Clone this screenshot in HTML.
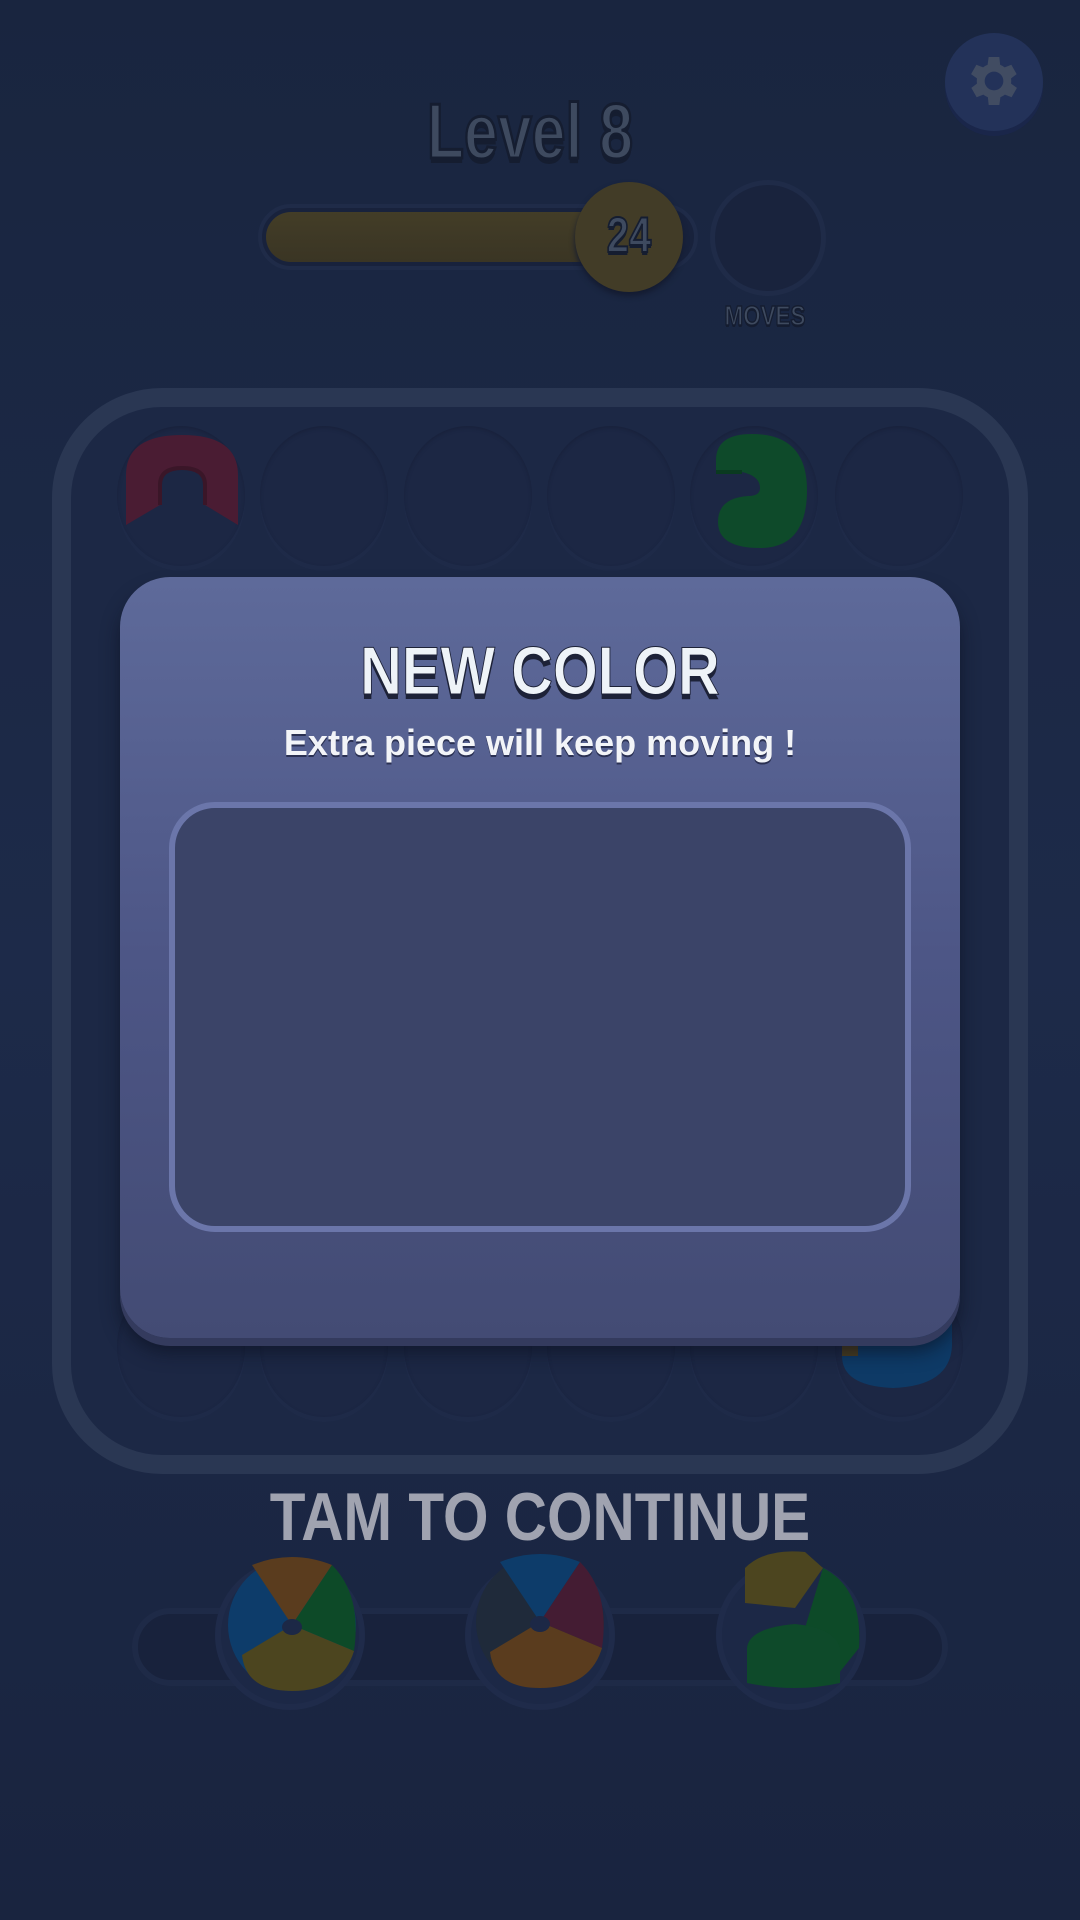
<!DOCTYPE html>
<html><head><meta charset="utf-8"><style>
*{margin:0;padding:0;box-sizing:border-box}
body{width:1080px;height:1920px;overflow:hidden;background:linear-gradient(#19253f,#1d2a49 50%,#19243f);font-family:"Liberation Sans",sans-serif;position:relative}
.abs{position:absolute}
.t{font-family:"Liberation Sans",sans-serif;font-weight:bold;text-align:center}
.hole{position:absolute;width:128px;height:140px;border-radius:50%;background:#1c2744;box-shadow:0 5px 0 #1e2a48,inset 0 2px 3px #19223c}
</style></head><body>
<!-- settings -->
<div class="abs" style="left:945px;top:33px;width:98px;height:98px;border-radius:50%;background:#233259;box-shadow:0 5px 0 #1a264a"></div>
<svg class="abs" style="left:962px;top:49px" width="64" height="64" viewBox="0 0 24 24"><path fill="#414c62" d="M19.4 13a7.5 7.5 0 0 0 0-2l2.1-1.6-2-3.5-2.5 1a7.3 7.3 0 0 0-1.7-1L15 3h-4l-.4 2.9a7.3 7.3 0 0 0-1.7 1l-2.5-1-2 3.5L6.6 11a7.5 7.5 0 0 0 0 2l-2.1 1.6 2 3.5 2.5-1c.5.4 1.1.7 1.7 1L11 21h4l.4-2.9c.6-.3 1.2-.6 1.7-1l2.5 1 2-3.5zM13 15.5A3.5 3.5 0 1 1 13 8.5a3.5 3.5 0 0 1 0 7z" transform="translate(-1 0)"/></svg>
<!-- level -->
<div class="abs t" style="left:330px;top:86px;width:400px;font-size:78px;color:#3e4a5f;-webkit-text-stroke:3px #151d30;text-shadow:0 5px 0 #151d30;transform:scaleX(0.78)">Level 8</div>
<!-- progress -->
<div class="abs" style="left:258px;top:204px;width:440px;height:66px;border-radius:33px;background:#18223c;border:4px solid #1f2b48"></div>
<div class="abs" style="left:266px;top:212px;width:370px;height:50px;border-radius:25px;background:linear-gradient(#433d27,#3a3524)"></div>
<div class="abs" style="left:710px;top:180px;width:116px;height:116px;border-radius:50%;background:#19233d;border:5px solid #1f2b48"></div>
<div class="abs" style="left:575px;top:182px;width:108px;height:110px;border-radius:50%;background:#423c27;box-shadow:0 4px 6px #141b30"></div>
<div class="abs t" style="left:575px;top:206px;width:108px;font-size:50px;color:#3e4a5f;-webkit-text-stroke:2px #151d30;text-shadow:0 3px 0 #151d30;transform:scaleX(0.8)">24</div>
<div class="abs t" style="left:700px;top:300px;width:130px;font-size:28px;color:#3e4a5f;-webkit-text-stroke:1.5px #151d30;text-shadow:0 2px 0 #151d30;transform:scaleX(0.8)">MOVES</div>
<!-- board -->
<div class="abs" style="left:52px;top:388px;width:976px;height:1086px;border-radius:110px;border:19px solid #2a3753;background:#1c2845"></div>
<div class="hole" style="left:117px;top:426px"></div>
<div class="hole" style="left:260px;top:426px"></div>
<div class="hole" style="left:404px;top:426px"></div>
<div class="hole" style="left:547px;top:426px"></div>
<div class="hole" style="left:690px;top:426px"></div>
<div class="hole" style="left:835px;top:426px"></div>
<div class="hole" style="left:117px;top:1277px"></div>
<div class="hole" style="left:260px;top:1277px"></div>
<div class="hole" style="left:404px;top:1277px"></div>
<div class="hole" style="left:547px;top:1277px"></div>
<div class="hole" style="left:690px;top:1277px"></div>
<div class="hole" style="left:835px;top:1277px"></div>
<!-- top pieces -->
<svg class="abs" style="left:120px;top:430px" width="125" height="110"><path d="M6 95 L6 45 Q6 5 62 5 Q118 5 118 45 L118 95 L85 75 L85 55 Q85 38 62 38 Q40 38 40 55 L40 75 Z" fill="#4a1c33"/><path d="M40 75 L40 55 Q40 38 62 38 Q85 38 85 55 L85 75" fill="none" stroke="#3a1628" stroke-width="4"/></svg>
<svg class="abs" style="left:712px;top:430px" width="100" height="125"><path d="M4 30 Q4 4 40 4 Q95 4 95 60 Q95 118 48 118 Q6 118 6 92 Q6 68 36 66 Q48 66 48 58 Q48 46 30 42 L4 42 Z" fill="#0e4a2a"/><path d="M4 42 L30 42" stroke="#0a3a20" stroke-width="4"/></svg>
<!-- right bottom piece -->
<svg class="abs" style="left:838px;top:1316px" width="120" height="80"><path d="M4 40 Q4 70 55 72 Q112 70 114 30 L114 0 L4 0 Z" fill="#0e3a66"/><path d="M4 0 L4 40 L20 40 L20 0Z" fill="#4a3d1f"/></svg>
<!-- modal -->
<div class="abs" style="left:120px;top:577px;width:840px;height:761px;border-radius:50px;background:linear-gradient(#5e6a9a,#4d5686 50%,#434b74);box-shadow:0 8px 0 #343b5e,0 14px 18px rgba(10,15,30,.6)"></div>
<div class="abs" style="left:120px;top:632px;width:840px;text-align:center;font-weight:bold;font-size:68px;color:#eef3f8;text-shadow:0 5px 0 #1d2238;-webkit-text-stroke:1px #1d2238;transform:scaleX(0.85)">NEW COLOR</div>
<div class="abs" style="left:120px;top:722px;width:840px;text-align:center;font-weight:bold;font-size:36px;color:#f2f4f8;text-shadow:0 2px 0 #2a3052">Extra piece will keep moving !</div>
<div class="abs" style="left:169px;top:802px;width:742px;height:430px;border-radius:46px;border:6px solid #6b76aa;background:#3b4468"></div>
<!-- tap -->
<div class="abs t" style="left:140px;top:1478px;width:800px;font-size:68px;color:#a0a3b0;transform:scaleX(0.86)">TAM TO CONTINUE</div>
<!-- tray -->
<div class="abs" style="left:132px;top:1608px;width:816px;height:78px;border-radius:39px;background:#18223c;border:6px solid #1e2a47"></div>
<div class="abs" style="left:215px;top:1560px;width:150px;height:150px;border-radius:50%;background:#1c2846;border:6px solid #1f2b4a"></div>
<div class="abs" style="left:465px;top:1560px;width:150px;height:150px;border-radius:50%;background:#1c2846;border:6px solid #1f2b4a"></div>
<div class="abs" style="left:716px;top:1560px;width:150px;height:150px;border-radius:50%;background:#1c2846;border:6px solid #1f2b4a"></div>
<svg class="abs" style="left:222px;top:1555px" width="140" height="140" viewBox="0 0 140 140">
<ellipse cx="70" cy="70" rx="64" ry="66" fill="#0d3c6a"/>
<path d="M70 70 L30 10 Q70 -6 110 10 Z" fill="#5a3c1e"/>
<path d="M70 70 L110 10 Q140 40 132 96 Z" fill="#0d4a28"/>
<path d="M70 70 L132 96 Q120 136 70 136 Q24 136 20 100 Z" fill="#4c451f"/>
<ellipse cx="70" cy="72" rx="10" ry="8" fill="#1c2846"/></svg>
<svg class="abs" style="left:470px;top:1552px" width="140" height="140" viewBox="0 0 140 140">
<ellipse cx="70" cy="70" rx="64" ry="66" fill="#1f2a3a"/>
<path d="M70 70 L30 10 Q70 -6 110 10 Z" fill="#0d3c6a"/>
<path d="M70 70 L110 10 Q140 40 132 96 Z" fill="#441c33"/>
<path d="M70 70 L132 96 Q120 136 70 136 Q24 136 20 100 Z" fill="#5a3c1e"/>
<ellipse cx="70" cy="72" rx="10" ry="8" fill="#1c2846"/></svg>
<svg class="abs" style="left:735px;top:1548px" width="130" height="145" viewBox="0 0 130 145">
<path d="M10 20 Q30 0 70 4 L88 20 L60 60 L10 55 Z" fill="#4c451f"/>
<path d="M88 20 Q128 40 124 100 L100 130 L70 80 Z" fill="#0d4a28"/>
<path d="M12 100 Q14 80 60 76 Q100 80 105 100 L105 135 Q60 145 12 135 Z" fill="#0e4a2a"/></svg>
</body></html>
